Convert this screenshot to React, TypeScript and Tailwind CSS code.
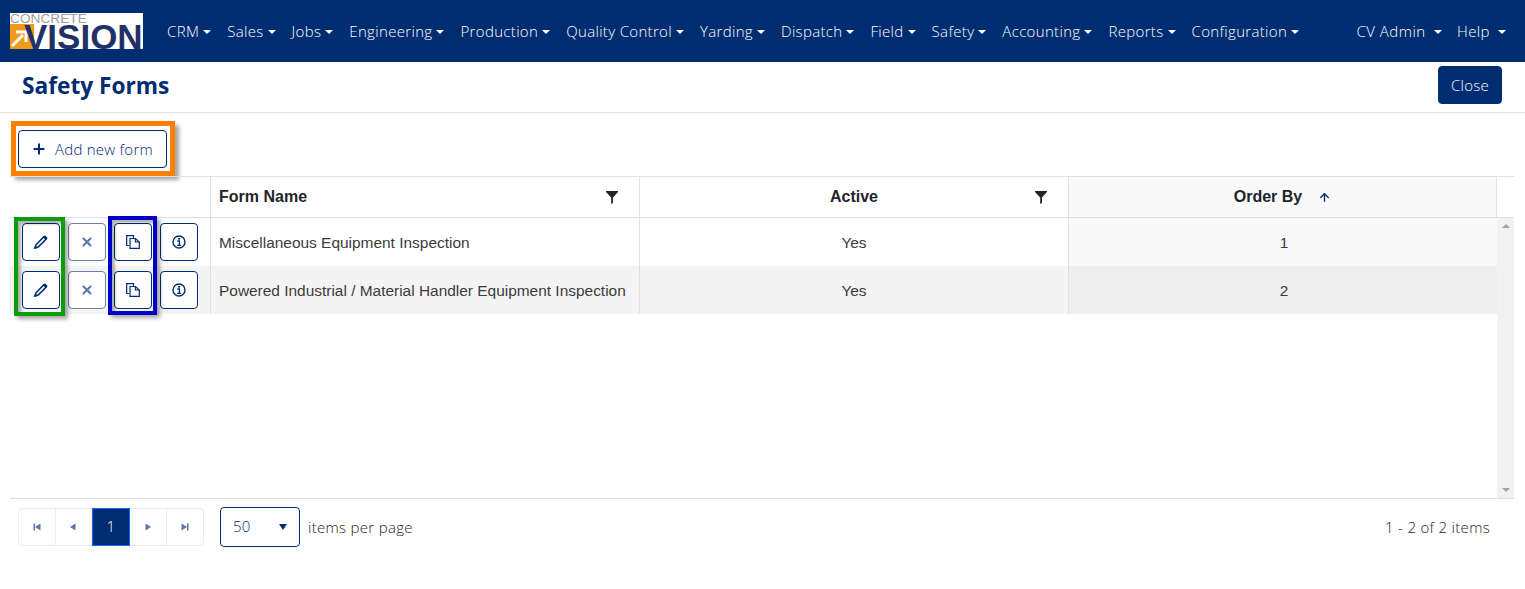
import { X, Plus, ArrowUp } from "lucide-react";

const navItems = [
  "CRM",
  "Sales",
  "Jobs",
  "Engineering",
  "Production",
  "Quality Control",
  "Yarding",
  "Dispatch",
  "Field",
  "Safety",
  "Accounting",
  "Reports",
  "Configuration",
];

const rows = [
  { name: "Miscellaneous Equipment Inspection", active: "Yes", order: 1 },
  { name: "Powered Industrial / Material Handler Equipment Inspection", active: "Yes", order: 2 },
];

function Caret() {
  return (
    <span className="ml-1 inline-block h-0 w-0 -translate-y-[3px] border-x-[4px] border-t-[4px] border-x-transparent border-t-white" />
  );
}

function Logo() {
  return (
    <div className="flex h-9 w-[133px] shrink-0 flex-col bg-white font-['Liberation_Sans',sans-serif] tracking-normal">
      <div className="h-[11px] whitespace-nowrap text-[13.7px] leading-[11px] text-[#a0a0a0]">CONCRETE</div>
      <div className="flex h-[25px] items-center">
        <svg viewBox="0 0 24 25" className="-mr-[10px] h-[25px] w-6 shrink-0">
          <rect width="24" height="25" fill="#f09a1a" />
          <path d="M2 22 L13 11 M6 8 H16 V18" stroke="#fff" strokeWidth="3" fill="none" />
        </svg>
        <span className="relative whitespace-nowrap text-[35px] font-bold leading-[25px] text-[#1f3166]">VISION</span>
      </div>
    </div>
  );
}

function IconButton({ children, muted }: { children: React.ReactNode; muted?: boolean }) {
  return (
    <button
      className={
        muted
          ? "flex h-[38px] w-[38px] items-center justify-center rounded border border-[#6b82ab] bg-white text-[#5d76a3]"
          : "flex h-[38px] w-[38px] items-center justify-center rounded border border-[#002d72] bg-white text-[#002d72]"
      }
    >
      {children}
    </button>
  );
}

function PencilIcon() {
  return (
    <svg viewBox="0 0 14 14" className="h-[14px] w-[14px]" fill="none" stroke="currentColor" strokeWidth="1.6">
      <path d="M1 13 L2 9.8 L9.7 2 L12 4.3 L4.2 12 Z" />
      <path d="M9.5 1.7 L11 0.3 L13.7 3 L12.3 4.5 Z M0.3 13.7 L1 10.5 L3.5 13 Z" fill="currentColor" stroke="none" />
    </svg>
  );
}

function CopyIcon() {
  return (
    <svg viewBox="0 0 14 14" className="h-[14px] w-[14px]" fill="none" stroke="currentColor" strokeWidth="1.2">
      <path d="M3 10.5 H0.7 V0.7 H7.5 V3" />
      <path d="M4 3.5 H9.5 L13.3 7 V13.3 H4 Z" />
      <path d="M9.5 3.5 V7 H13.3" />
    </svg>
  );
}

function InfoIcon() {
  return (
    <svg viewBox="0 0 14 14" className="h-[14px] w-[14px]" fill="none" stroke="currentColor" strokeWidth="1.4">
      <circle cx="7" cy="7" r="6" />
      <path d="M5.3 6 H7.4 V10.4 M5.2 10.4 H9" />
      <rect x="6.2" y="3" width="1.9" height="1.7" fill="currentColor" stroke="none" />
    </svg>
  );
}

function FunnelIcon() {
  return (
    <svg viewBox="0 0 12 13" className="h-[13px] w-3 shrink-0" fill="#212529">
      <path d="M0 0 H12 V1 L7 6.5 V12 L5.2 13 V6.5 L0 1 Z" />
    </svg>
  );
}

function Pager({ children, active }: { children: React.ReactNode; active?: boolean }) {
  return (
    <div
      className={
        active
          ? "-my-px flex h-[38px] w-[38px] items-center justify-center border border-[#0d6efd] bg-[#002d72] text-white"
          : "flex h-9 w-[36.5px] items-center justify-center border-r border-[#e9ecef] text-[#5d76a3] last:border-r-0"
      }
    >
      {children}
    </div>
  );
}

function FirstIcon({ flip }: { flip?: boolean }) {
  return (
    <svg viewBox="0 0 8 8" className={flip ? "h-2 w-2 rotate-180" : "h-2 w-2"} fill="currentColor">
      <rect x="0.5" y="0.5" width="1.5" height="7" />
      <path d="M7.5 0.5 V7.5 L2 4 Z" />
    </svg>
  );
}

function PrevIcon({ flip }: { flip?: boolean }) {
  return (
    <svg viewBox="0 0 8 8" className={flip ? "h-2 w-2 rotate-180" : "h-2 w-2"} fill="currentColor">
      <path d="M6.5 0.5 V7.5 L1 4 Z" />
    </svg>
  );
}

export default function App() {
  return (
    <div className="min-h-[589px] bg-white font-['Liberation_Sans',sans-serif] text-[#212529]">
      <nav className="flex h-[62px] items-center bg-[#002d72] pl-[10px] pr-[19px] font-['Open_Sans',sans-serif] text-[15px] font-light tracking-[0.33px] text-white">
        <Logo />
        <div className="ml-6 flex gap-4">
          {navItems.map((item) => (
            <span key={item} className="whitespace-nowrap">
              {item}
              <Caret />
            </span>
          ))}
        </div>
        <div className="ml-auto flex gap-[15px]">
          <span className="tracking-[0.5px]">
            CV Admin <Caret />
          </span>
          <span>
            Help <Caret />
          </span>
        </div>
      </nav>

      <header className="flex h-[51px] items-start justify-between border-b border-[#dee2e6] pl-[22px] pr-[23px] pt-1">
        <h1 className="pt-[2px] font-['Open_Sans',sans-serif] text-[22.7px] font-bold leading-[35px] text-[#002d72]">Safety Forms</h1>
        <button className="h-[38px] w-16 rounded border border-[#002d72] bg-[#002d72] font-['Open_Sans',sans-serif] text-[15px] font-light tracking-[0.3px] text-white">
          Close
        </button>
      </header>

      <div className="pl-[10px] pr-[11px]">
        <div className="h-[63px] pt-[8px]">
          <div className="ml-px w-fit border-[5px] border-[#ff7f00] pb-[3px] pl-[2px] pr-[3px] pt-1 shadow-[4px_4px_4px_rgba(0,0,0,0.35)]">
            <button className="flex h-[38px] w-[149px] items-center gap-2 rounded border border-[#002d72] bg-white pl-3 font-['Open_Sans',sans-serif] text-[15px] font-light tracking-[0.25px] text-[#002d72]">
              <Plus size={16} strokeWidth={3} />
              Add new form
            </button>
          </div>
        </div>

        <div className="relative border-t border-[#dee2e6]">
          <div className="grid grid-cols-[201px_429px_429px_428px_17px] border-b border-[#dee2e6] text-base font-bold">
            <div className="h-10 border-r border-[#dee2e6]" />
            <div className="flex h-10 items-center justify-between border-r border-[#dee2e6] pl-2 pr-[21px]">
              Form Name
              <FunnelIcon />
            </div>
            <div className="flex h-10 items-center border-r border-[#dee2e6] pr-[21px]">
              <span className="flex-1 pl-[33px] text-center">Active</span>
              <FunnelIcon />
            </div>
            <div className="flex h-10 items-center justify-center gap-4 border-r border-[#dee2e6] bg-[#f9f9f9]">
              Order By
              <ArrowUp size={13} strokeWidth={2.5} className="text-[#002d72]" />
            </div>
            <div />
          </div>

          <div className="flex h-[280px]">
            <div className="w-[1487px] shrink-0">
              {rows.map((row, i) => (
                <div
                  key={row.name}
                  className={
                    i % 2 === 1
                      ? "grid h-12 grid-cols-[201px_429px_429px_428px] bg-[#f4f4f4]"
                      : "grid h-12 grid-cols-[201px_429px_429px_428px]"
                  }
                >
                  <div className="flex items-center justify-center gap-2 border-r border-[#dee2e6]">
                    <IconButton>
                      <PencilIcon />
                    </IconButton>
                    <IconButton muted>
                      <X size={14} strokeWidth={3.5} />
                    </IconButton>
                    <IconButton>
                      <CopyIcon />
                    </IconButton>
                    <IconButton>
                      <InfoIcon />
                    </IconButton>
                  </div>
                  <div className="flex items-center whitespace-nowrap border-r border-[#dee2e6] pl-2 pt-px text-[15.45px] text-[#3b3b3b]">
                    {row.name}
                  </div>
                  <div className="flex items-center justify-center border-r border-[#dee2e6] pt-px text-[15.45px] text-[#3b3b3b]">
                    {row.active}
                  </div>
                  <div
                    className={
                      i % 2 === 1
                        ? "flex items-center justify-center bg-[#eeeeee] pl-0.5 pt-px text-[15.45px] text-[#3b3b3b]"
                        : "flex items-center justify-center bg-[#f9f9f9] pl-0.5 pt-px text-[15.45px] text-[#3b3b3b]"
                    }
                  >
                    {row.order}
                  </div>
                </div>
              ))}
            </div>
            <div className="flex w-[17px] flex-col items-center justify-between bg-[#f1f1f1] py-[6px]">
              <span className="h-0 w-0 border-x-[4px] border-b-[4px] border-x-transparent border-b-[#a3a3a3]" />
              <span className="h-0 w-0 border-x-[4px] border-t-[4px] border-x-transparent border-t-[#a3a3a3]" />
            </div>
          </div>

          {/* highlight boxes sit on top of the action buttons */}
          <div className="absolute left-[4px] top-[40px] h-[99px] w-[51px] border-[4px] border-[#0a9c0a] shadow-[3px_3px_4px_rgba(0,0,0,0.35),inset_3px_3px_3px_rgba(0,0,0,0.3)]" />
          <div className="absolute left-[98px] top-[39px] h-[99px] w-[49px] border-[4px] border-[#0000c8] shadow-[3px_3px_4px_rgba(0,0,0,0.35),inset_3px_3px_3px_rgba(0,0,0,0.3)]" />
        </div>

        <div className="flex h-14 items-center border-t border-[#dee2e6] pl-2 pr-[24px] font-['Open_Sans',sans-serif] text-[15px] font-light tracking-[0.3px]">
          <div className="flex items-center rounded border border-[#e9ecef]">
            <Pager><FirstIcon /></Pager>
            <Pager><PrevIcon /></Pager>
            <Pager active>1</Pager>
            <Pager><PrevIcon flip /></Pager>
            <Pager><FirstIcon flip /></Pager>
          </div>
          <div className="ml-4 flex h-10 w-20 items-center justify-between rounded border border-[#002d72] px-3 text-[#002d72]">
            50
            <span className="h-0 w-0 border-x-[4px] border-t-[6px] border-x-transparent border-t-[#002d72]" />
          </div>
          <span className="ml-2 pt-[2px] text-[#212529]">items per page</span>
          <span className="ml-auto pt-[2px] text-[#212529]">1 - 2 of 2 items</span>
        </div>
      </div>
    </div>
  );
}
